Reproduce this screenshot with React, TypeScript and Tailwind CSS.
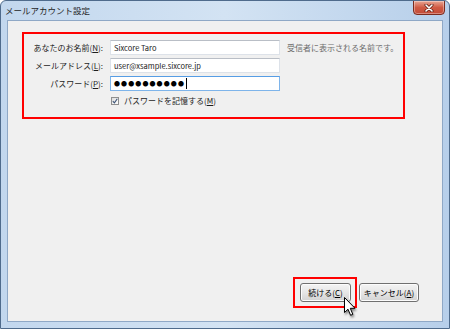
import React from 'react';

const font = { fontFamily: '"Noto Sans CJK JP", "Liberation Sans", sans-serif' };

// アクセスキー付きのラベル（下線付き文字）
const Label = ({ text, keyChar, colon = true }: { text: string; keyChar: string; colon?: boolean }) => (
  <>
    {text}(<span className="underline underline-offset-1">{keyChar}</span>){colon ? ':' : ''}
  </>
);

const TextBox = ({ children, focused = false }: { children: React.ReactNode; focused?: boolean }) => (
  <div
    className={`flex h-[15px] w-[170px] items-center bg-white pl-[3px] text-[7.5px] text-[#222] ${
      focused
        ? 'border border-[#7eb4ea] border-t-[#569de5]'
        : 'border border-[#dde2e9] border-t-[#b9bec6]'
    }`}
  >
    {children}
  </div>
);

const Button = ({ children, w }: { children: React.ReactNode; w: string }) => (
  <div
    className={`flex h-[19px] ${w} items-center justify-center rounded-[3px] border border-[#707070] bg-gradient-to-b from-[#f4f4f4] via-[#e6e6e6] to-[#d3d3d3] text-[8px] text-black shadow-[inset_0_0_0_1px_#fcfcfc]`}
  >
    {children}
  </div>
);

export default function App() {
  return (
    <div
      className="relative flex h-[329px] w-[450px] flex-col overflow-hidden rounded-t-[6px] border border-[#4f6b8c] bg-gradient-to-r from-[#c2d7ee] via-[#d3e3f3] to-[#b7cfea]"
      style={font}
    >
      {/* タイトルバー */}
      <div className="flex h-[19px] shrink-0 items-start justify-between pr-[4px]">
        <div className="pl-[4px] pt-[3px] text-[8.5px] leading-[12px] text-[#1f1f1f]">メールアカウント設定</div>
        <div className="-mt-px flex h-[15px] w-[32px] items-center justify-center rounded-b-[4px] border border-[#7b2b1e] bg-gradient-to-b from-[#e7a594] via-[#cf5a44] to-[#c24a36] shadow-[inset_0_0_0_1px_rgba(255,255,255,0.35)]">
          <svg width="10" height="8" viewBox="0 0 10 8">
            <path d="M2 1 L8 7 M8 1 L2 7" stroke="#5a1a10" strokeWidth="3" strokeLinecap="round" />
            <path d="M2 1 L8 7 M8 1 L2 7" stroke="#ffffff" strokeWidth="1.6" strokeLinecap="round" />
          </svg>
        </div>
      </div>

      {/* 本体 */}
      <div className="mx-[6px] mb-[6px] flex flex-1 flex-col border border-[#8fa8c6] bg-[#f0f0f0]">
        <div className="ml-[14px] mt-[11px] flex h-[87px] w-[383px] flex-col border-2 border-[#ff0000] pt-[6px]">
          <div className="flex flex-col gap-[3px] text-[8px] text-[#1e1e1e]">
            <div className="flex items-center">
              <div className="w-[79px] text-right"><Label text="あなたのお名前" keyChar="N" /></div>
              <div className="ml-[7px]"><TextBox>Sixcore Taro</TextBox></div>
              <div className="ml-[7px] text-[#6d6d6d]">受信者に表示される名前です。</div>
            </div>
            <div className="flex items-center">
              <div className="w-[79px] text-right"><Label text="メールアドレス" keyChar="L" /></div>
              <div className="ml-[7px]"><TextBox>user@xsample.sixcore.jp</TextBox></div>
            </div>
            <div className="flex items-center">
              <div className="w-[79px] text-right"><Label text="パスワード" keyChar="P" /></div>
              <div className="ml-[7px]">
                <TextBox focused>
                  <span className="text-[6px] leading-none tracking-[1.1px] text-black">●●●●●●●●●●</span>
                  <span className="ml-[1px] h-[11px] w-px bg-black" />
                </TextBox>
              </div>
            </div>
          </div>
          <div className="ml-[87px] mt-[4px] flex h-[12px] items-center gap-[5px] text-[8px] text-[#1e1e1e]">
            <div className="flex h-[8px] w-[8px] items-center justify-center border border-[#8e8f8f] bg-gradient-to-br from-[#dcdcdc] to-[#ffffff]">
              <svg width="6" height="6" viewBox="0 0 6 6">
                <path d="M0.8 3.2 L2.4 4.8 L5.3 0.8" stroke="#3d5477" strokeWidth="1.1" fill="none" />
              </svg>
            </div>
            <span><Label text="パスワードを記憶する" keyChar="M" colon={false} /></span>
          </div>
        </div>

        <div className="flex-1" />

        {/* ボタン */}
        <div className="mb-[13px] mr-[23px] flex items-center justify-end gap-[2px]">
          <div className="border-2 border-[#ff0000] py-[4px] pl-[5px] pr-[4px]">
            <Button w="w-[51px]"><Label text="続ける" keyChar="C" colon={false} /></Button>
          </div>
          <Button w="w-[60px]"><Label text="キャンセル" keyChar="A" colon={false} /></Button>
        </div>
      </div>

      {/* マウスカーソル */}
      <svg
        className="absolute left-[343px] top-[296px] drop-shadow-[1px_2px_1px_rgba(0,0,0,0.45)]"
        width="13"
        height="20"
        viewBox="0 0 13 20"
      >
        <path
          d="M0.5 0.5 L0.5 15.5 L4 12.2 L6.6 18.3 L8.8 17.3 L6.3 11.3 L11 11.3 Z"
          fill="#ffffff"
          stroke="#000000"
          strokeWidth="1"
          strokeLinejoin="round"
        />
      </svg>
    </div>
  );
}
